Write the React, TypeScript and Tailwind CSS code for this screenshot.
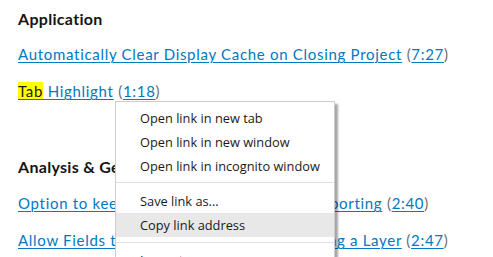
import React from "react";

const page = { fontFamily: "Lato, 'Noto Sans', sans-serif" };
const menuFont = { fontFamily: "'Open Sans', 'Noto Sans', sans-serif" };

function Link({ children }: { children: React.ReactNode }) {
  return <span className="text-[#0079c1] underline underline-offset-2 decoration-1">{children}</span>;
}

function Row({ title, time }: { title: React.ReactNode; time: string }) {
  return (
    <div className="h-[37px] leading-[37px] text-[15px] tracking-[0.7px] whitespace-nowrap">
      {title} <span className="text-[#6e6e6e]">(</span>
      <Link>{time}</Link>
      <span className="text-[#6e6e6e]">)</span>
    </div>
  );
}

function ContextMenu() {
  const top = ["Open link in new tab", "Open link in new window", "Open link in incognito window"];
  return (
    <div
      className="absolute left-[115px] top-[101px] w-[220px] bg-white border border-[#cccccc] shadow-[3px_3px_2px_rgba(0,0,0,0.35)] pt-[4px] text-[12.8px] text-[#1a1a1a]"
      style={menuFont}
    >
      {top.map((t) => (
        <div key={t} className="h-[24px] leading-[24px] pl-[24px]">
          {t}
        </div>
      ))}
      <div className="pt-[4px] pb-[6px]">
        <div className="h-px bg-[#e0e0e0]" />
      </div>
      <div className="h-[24px] leading-[24px] pl-[24px]">Save link as...</div>
      <div className="h-[24px] leading-[24px] pl-[24px] bg-[#e8e8e8]">Copy link address</div>
      <div className="py-[5px]">
        <div className="h-px bg-[#e0e0e0]" />
      </div>
      <div className="h-[24px] leading-[24px] pl-[24px]">Inspect</div>
    </div>
  );
}

export default function App() {
  return (
    <div className="relative w-[493px] h-[257px] overflow-hidden bg-white text-[#151515]" style={page}>
      <div className="px-[18px]">
        <div className="h-[36px] leading-[37px] text-[16px] font-bold tracking-[0.3px]">Application</div>
        <Row title={<Link>Automatically Clear Display Cache on Closing Project</Link>} time="7:27" />
        <Row
          title={
            <span className="text-[#0079c1] underline underline-offset-2 decoration-1">
              <span className="bg-[#ffff00] text-[#1a1a1a]">Tab</span> Highlight
            </span>
          }
          time="1:18"
        />
        <div className="mt-[38px] h-[37px] leading-[37px] text-[16px] font-bold tracking-[0.3px]">
          Analysis &amp; Geoprocessing
        </div>
        <Row title={<Link>Option to keep Layer Field Aliases while Exporting</Link>} time="2:40" />
        <Row title={<Link>Allow Fields to be Switched Off when Adding a Layer</Link>} time="2:47" />
      </div>
      <ContextMenu />
    </div>
  );
}
